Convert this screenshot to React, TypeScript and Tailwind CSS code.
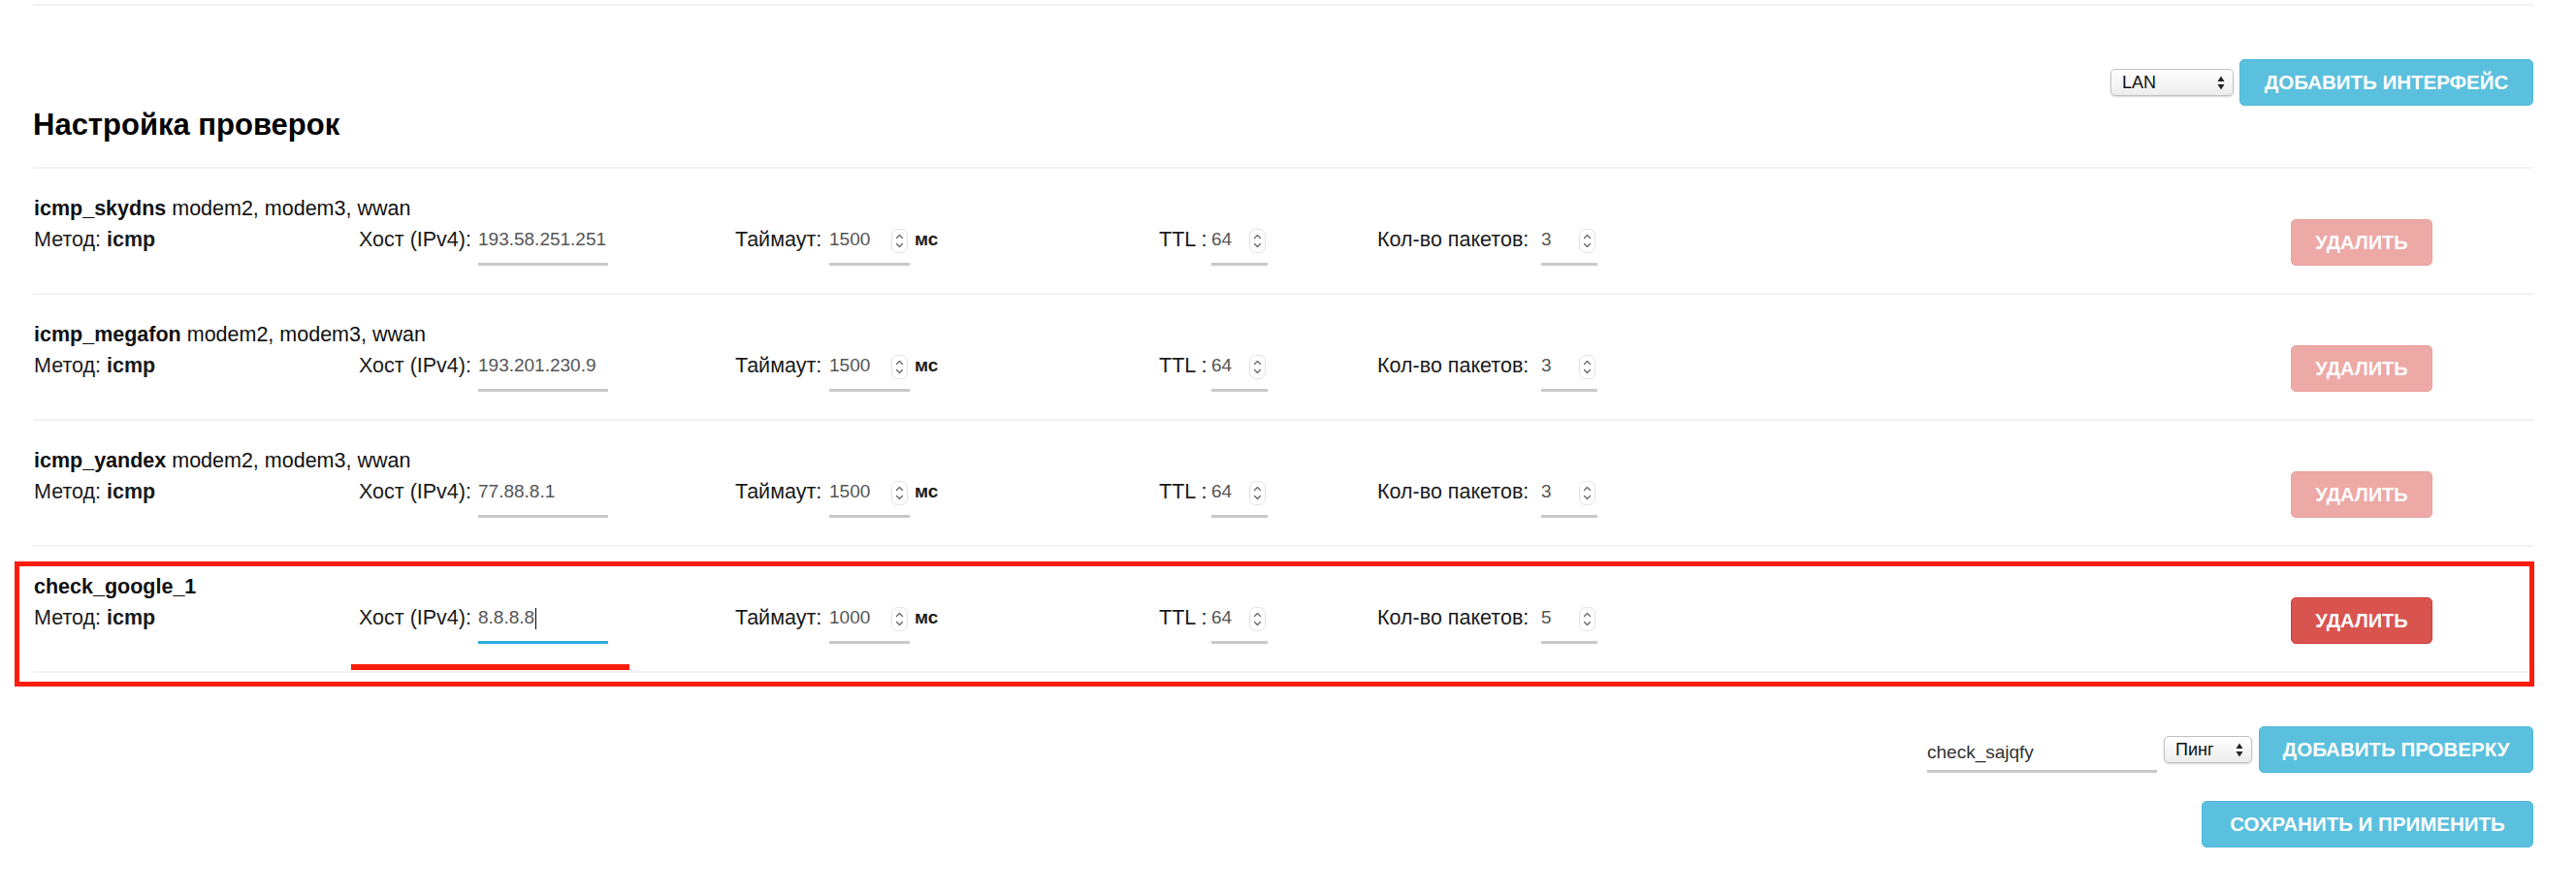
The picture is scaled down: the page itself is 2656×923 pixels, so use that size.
import React from "react";

type Check = {
  name: string;
  ifaces?: string;
  host: string;
  timeout: string;
  ttl: string;
  count: string;
  active?: boolean;
};

const checks: Check[] = [
  { name: "icmp_skydns", ifaces: "modem2, modem3, wwan", host: "193.58.251.251", timeout: "1500", ttl: "64", count: "3" },
  { name: "icmp_megafon", ifaces: "modem2, modem3, wwan", host: "193.201.230.9", timeout: "1500", ttl: "64", count: "3" },
  { name: "icmp_yandex", ifaces: "modem2, modem3, wwan", host: "77.88.8.1", timeout: "1500", ttl: "64", count: "3" },
  { name: "check_google_1", host: "8.8.8.8", timeout: "1000", ttl: "64", count: "5", active: true },
];

function Spinner() {
  return (
    <svg width="17" height="25" viewBox="0 0 17 25" className="shrink-0">
      <rect x="0.5" y="0.5" width="16" height="24" rx="6" fill="#fff" stroke="#e2e2e2" />
      <path d="M5.5 9.5 L8.5 6.5 L11.5 9.5" fill="none" stroke="#666" strokeWidth="1.3" strokeLinecap="round" strokeLinejoin="round" />
      <path d="M5.5 15.5 L8.5 18.5 L11.5 15.5" fill="none" stroke="#666" strokeWidth="1.3" strokeLinecap="round" strokeLinejoin="round" />
    </svg>
  );
}

function NumberInput({ value, width }: { value: string; width: string }) {
  return (
    <div className={`${width} h-[43px] border-b-[3px] border-[#c9c9c9] flex items-start justify-between`}>
      <span className="text-[19px] leading-[32px] text-[#555]">{value}</span>
      <div className="mt-[5px] mr-[2px]">
        <Spinner />
      </div>
    </div>
  );
}

function SelectArrows() {
  return (
    <svg width="8" height="15" viewBox="0 0 8 15" className="shrink-0">
      <path d="M4 0.5 L7.5 6 L0.5 6 Z" fill="#222" />
      <path d="M4 14.5 L7.5 9 L0.5 9 Z" fill="#222" />
    </svg>
  );
}

function SelectBox({ label, width }: { label: string; width: string }) {
  return (
    <div
      className={`${width} h-[28px] rounded-[5px] border border-[#c2c2c2] bg-linear-to-b from-white to-[#ededed] shadow-[0_1px_2px_rgba(0,0,0,0.18)] flex items-center justify-between pl-[11px] pr-[8px] text-[18px] text-[#111]`}
    >
      <span>{label}</span>
      <SelectArrows />
    </div>
  );
}

function InfoButton({ children, width }: { children: React.ReactNode; width: string }) {
  return (
    <div
      className={`${width} h-[48px] rounded-[5px] bg-[#5bc0de] border border-[#4fb9da] text-white font-bold text-[20.5px] flex items-center justify-center`}
    >
      {children}
    </div>
  );
}

function CheckRow({ c }: { c: Check }) {
  return (
    <div className="relative border-t-2 border-[#f2f2f2] pt-[25px] pb-[28px] pl-px">
      <div className="h-[32px] leading-[32px] text-[21.5px] text-[#111]">
        <b>{c.name}</b>
        {c.ifaces ? <span> {c.ifaces}</span> : null}
      </div>
      <div className="flex items-start h-[43px] text-[21.5px] text-[#1a1a1a]">
        <div className="w-[335px] leading-[32px]">
          Метод: <b>icmp</b>
        </div>
        <div className="w-[388px] flex items-start">
          <span className="w-[123px] leading-[32px]">Хост (IPv4):</span>
          <div
            className={`w-[134px] h-[43px] border-b-[3px] ${c.active ? "border-[#2eaee0]" : "border-[#c9c9c9]"} flex items-start`}
          >
            <span className="text-[19px] leading-[32px] text-[#555]">{c.host}</span>
            {c.active ? <span className="mt-[6px] ml-px w-px h-[22px] bg-black" /> : null}
          </div>
        </div>
        <div className="w-[437px] flex items-start">
          <span className="w-[97px] leading-[32px]">Таймаут:</span>
          <NumberInput value={c.timeout} width="w-[83px]" />
          <span className="ml-[5px] leading-[32px] font-bold text-[19px]">мс</span>
        </div>
        <div className="w-[225px] flex items-start">
          <span className="w-[54px] leading-[32px]">TTL :</span>
          <NumberInput value={c.ttl} width="w-[58px]" />
        </div>
        <div className="flex items-start">
          <span className="w-[169px] leading-[32px]">Кол-во пакетов:</span>
          <NumberInput value={c.count} width="w-[58px]" />
        </div>
        <div
          className={`ml-auto mr-[104px] -mt-[5px] w-[146px] h-[48px] rounded-[5px] text-white font-bold text-[20px] flex items-center justify-center ${c.active ? "bg-[#d9534f] border border-[#d43f3a]" : "bg-[#eca9a6] border border-[#eba29f]"}`}
        >
          УДАЛИТЬ
        </div>
      </div>
      {c.active ? (
        <>
          <div className="absolute top-[15px] left-[-19px] right-[-1px] bottom-[-16px] border-[5px] border-[#fb1d0c] pointer-events-none" />
          <div className="absolute top-[121px] left-[328px] w-[287px] h-[6px] bg-[#fb1d0c]" />
        </>
      ) : null}
    </div>
  );
}

export default function App() {
  return (
    <div className="w-[2656px] min-h-[923px] bg-white font-['Liberation_Sans',Arial,sans-serif] text-[#111] pl-[34px] pr-[44px]">
      <div className="pt-[4px]">
        <div className="h-[2px] bg-[#f2f2f2]" />
      </div>
      <div className="flex justify-end items-center gap-[6px] mt-[55px]">
        <SelectBox label="LAN" width="w-[127px]" />
        <InfoButton width="w-[303px]">ДОБАВИТЬ ИНТЕРФЕЙС</InfoButton>
      </div>
      <h3 className="mt-[2px] mb-[25px] text-[31px] leading-[36px] font-bold text-black">Настройка проверок</h3>
      <div className="border-b-2 border-[#f2f2f2]">
        {checks.map((c) => (
          <CheckRow key={c.name} c={c} />
        ))}
      </div>
      <div className="flex justify-end items-center gap-[7px] mt-[55px]">
        <div className="w-[237px] h-[48px] border-b-[3px] border-[#c9c9c9] pt-[11px]">
          <span className="text-[19px] leading-[32px] text-[#333]">check_sajqfy</span>
        </div>
        <SelectBox label="Пинг" width="w-[91px]" />
        <InfoButton width="w-[283px]">ДОБАВИТЬ ПРОВЕРКУ</InfoButton>
      </div>
      <div className="flex justify-end mt-[29px]">
        <InfoButton width="w-[342px]">СОХРАНИТЬ И ПРИМЕНИТЬ</InfoButton>
      </div>
    </div>
  );
}
